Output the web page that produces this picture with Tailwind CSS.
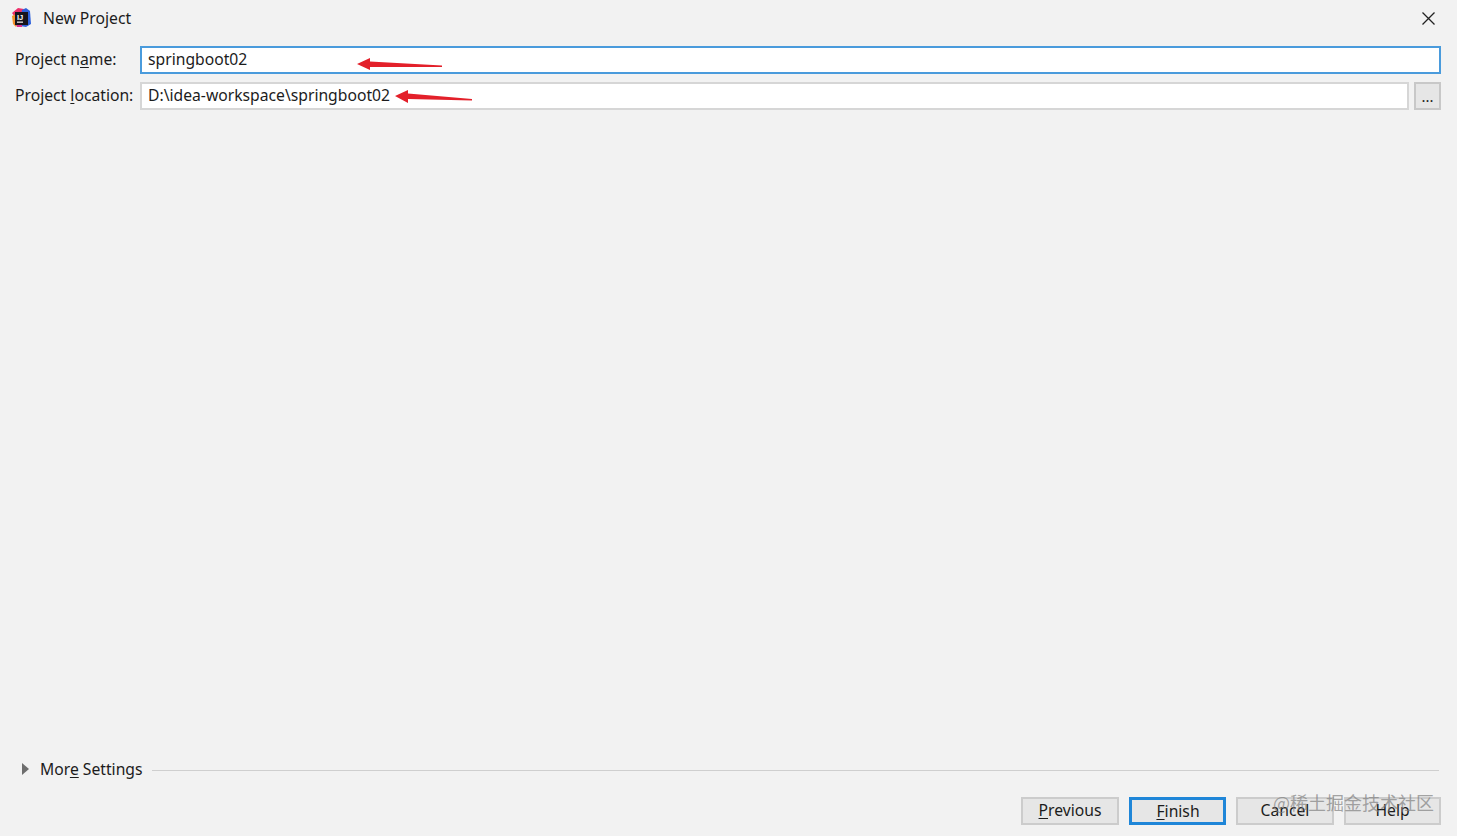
<!DOCTYPE html>
<html lang="en">
<head>
    <meta charset="UTF-8">
    <title>New Project</title>
    <script src="https://cdn.jsdelivr.net/npm/@tailwindcss/browser@4"></script>
</head>
<body class="bg-[#f2f2f2] h-screen overflow-hidden relative flex flex-col font-['Noto_Sans','Open_Sans',sans-serif] text-[15.7px] text-[#1c1c1c]">

    <!-- title bar -->
    <div class="h-[36px] flex items-center pl-[10px] pr-[21px]">
        <svg class="w-[22px] h-[22px]" viewBox="0 0 22 22">
            <path d="M2 6 L8 1 L14 2 L12 9 L5 10 Z" fill="#ee2f6b"/>
            <path d="M2 9 L6 7 L8 16 L6 20 L3 17 Z" fill="#f5922a"/>
            <path d="M12 3 L16 1 L20 4 L21 17 L16 20 L10 19 Z" fill="#2f62dc"/>
            <path d="M5 15 L12 15 L12 20 L7 20 Z" fill="#d92f8f"/>
            <rect x="5" y="5" width="13" height="13" fill="#17141c"/>
            <rect x="7" y="14.5" width="6" height="1.3" fill="#e8e8e8"/>
            <text x="7" y="12.5" font-size="7.5" font-weight="700" fill="#fff" font-family="Liberation Sans">IJ</text>
        </svg>
        <span class="ml-[11px] leading-[20px]">New Project</span>
        <svg class="ml-auto w-[15px] h-[15px]" viewBox="0 0 15 15" fill="none" stroke="#222" stroke-width="1.3">
            <path d="M1.5 1.5 L13.5 13.5 M13.5 1.5 L1.5 13.5"/>
        </svg>
    </div>

    <!-- form -->
    <div class="mt-[10px] pl-[15px] pr-[16px] flex flex-col gap-[8px]">
        <div class="flex items-center h-[28px]">
            <label class="w-[125px]">Project n<span class="underline underline-offset-2">a</span>me:</label>
            <div class="flex-1 h-[28px] bg-white border-2 border-[#4a9bdc] px-[6px] flex items-center">springboot02</div>
        </div>
        <div class="flex items-center h-[28px]">
            <label class="w-[125px] whitespace-nowrap">Project <span class="underline underline-offset-2">l</span>ocation:</label>
            <div class="flex-1 h-[28px] bg-white border-2 border-[#d6d6d6] px-[6px] flex items-center">D:\idea-workspace\springboot02</div>
            <button class="ml-[5px] w-[27px] h-[28px] bg-[#e6e6e6] border-2 border-[#c8c8c8] text-[15px] leading-none flex items-center justify-center">...</button>
        </div>
    </div>

    <div class="flex-1"></div>

    <!-- more settings -->
    <div class="flex items-center h-[20px] pl-[22px] pr-[18px]">
        <svg class="w-[7px] h-[12px]" viewBox="0 0 7 12"><path d="M0 0 L7 6 L0 12 Z" fill="#6e6e6e"/></svg>
        <span class="ml-[11px] pt-[2px]">Mor<span class="underline underline-offset-2">e</span> Settings</span>
        <div class="flex-1 ml-[9px] h-px bg-[#cfcfcf] mt-[2px]"></div>
    </div>

    <!-- buttons -->
    <div class="mt-[18px] mb-[11px] pr-[16px] flex justify-end gap-[10px]">
        <button class="w-[98px] h-[28px] pb-[3px] bg-[#e6e6e6] border-2 border-[#cccccc]"><span class="underline underline-offset-2">P</span>revious</button>
        <button class="w-[97px] h-[28px] pb-[5px] pl-[1px] bg-[#e6e6e6] border-[3px] border-[#1f86d8]"><span class="underline underline-offset-2">F</span>inish</button>
        <button class="w-[98px] h-[28px] pb-[3px] bg-[#e6e6e6] border-2 border-[#cccccc]">Cancel</button>
        <button class="w-[97px] h-[28px] pb-[3px] bg-[#e6e6e6] border-2 border-[#cccccc]">Help</button>
    </div>

    <!-- red annotation arrows drawn on top of the screenshot -->
    <svg class="absolute left-[355px] top-[55px] w-[90px] h-[18px]" viewBox="0 0 90 18">
        <path d="M2 9 L15 3 L15 6.5 L87 10.5 L87 12 L15 12 L15 15 Z" fill="#e3202a"/>
    </svg>
    <svg class="absolute left-[393px] top-[87px] w-[82px] h-[18px]" viewBox="0 0 82 18">
        <path d="M2 9 L15 3 L15 6.5 L79 12 L79 13.5 L15 12 L15 16 Z" fill="#e3202a"/>
    </svg>

    <!-- watermark -->
    <div class="absolute left-[1273px] top-[790px] text-[18px] leading-[24px] whitespace-nowrap text-[#808080]/70 font-['Noto_Sans_CJK_SC',sans-serif]">@稀土掘金技术社区</div>
</body>
</html>
